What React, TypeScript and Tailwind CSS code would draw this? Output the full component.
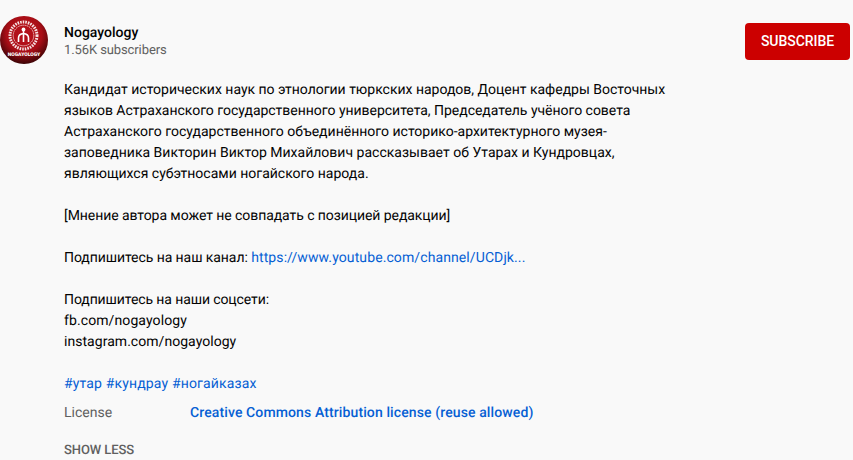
const Avatar = () => (
  <svg width="48" height="48" viewBox="0 0 48 48" className="shrink-0">
    <defs>
      <radialGradient id="bg" cx="50%" cy="38%" r="62%">
        <stop offset="0%" stopColor="#c0141c" />
        <stop offset="60%" stopColor="#a80e16" />
        <stop offset="100%" stopColor="#3c0406" />
      </radialGradient>
    </defs>
    <circle cx="24" cy="24" r="24" fill="url(#bg)" />
    <circle cx="23.5" cy="19.5" r="13.5" fill="none" stroke="#f6e3e3" strokeWidth="3" strokeDasharray="1.6 1" />
    <circle cx="23.5" cy="19.5" r="10.3" fill="none" stroke="#f6e3e3" strokeWidth="1" strokeDasharray="1.2 0.8" />
    <circle cx="23.5" cy="19.5" r="8.6" fill="#b2101a" />
    <circle cx="23.5" cy="13.5" r="1.9" fill="#fff" />
    <path d="M23.5 15 V26 M18.5 26 V22 Q18.5 18 23.5 17.5 Q28.5 18 28.5 22 V26" fill="none" stroke="#fff" strokeWidth="1.6" />
    <text x="24" y="39.5" textAnchor="middle" fill="#fff" fontSize="5" fontWeight="900" fontFamily="Roboto, sans-serif">NOGAYOLOGY</text>
  </svg>
);

const Link = ({ children }: { children: React.ReactNode }) => (
  <a className="text-[#065fd4]">{children}</a>
);

export default function App() {
  return (
    <div className="w-[853px] h-[460px] overflow-hidden bg-[#f9f9f9] font-['Roboto',sans-serif] text-[14px] leading-[21px] text-[#030303] [text-rendering:geometricPrecision]">
      <div className="flex items-start pt-4">
        <Avatar />
        <div className="ml-4 flex-1 pt-[8px]">
          <div className="font-medium leading-[18px]">Nogayology</div>
          <div className="text-[13px] leading-[18px] tracking-[-0.1px] text-[#606060]">1.56K subscribers</div>
        </div>
        <button className="mt-[7px] mr-[3px] h-[37px] w-[105px] rounded-sm bg-[#cc0000] text-[14px] font-medium tracking-[-0.05px] text-white">
          SUBSCRIBE
        </button>
      </div>
      <div className="ml-16 mt-4 w-[615px]">
        <p>
          <span className="tracking-[-0.012px]">Кандидат исторических наук по этнологии тюркских народов, Доцент кафедры Восточных</span>
          <br />
          <span className="tracking-[-0.025px]">языков Астраханского государственного университета, Председатель учёного совета</span>
          <br />
          Астраханского государственного объединённого историко-архитектурного музея-
          <br />
          <span className="tracking-[0.012px]">заповедника Викторин Виктор Михайлович рассказывает об Утарах и Кундровцах,</span>
          <br />
          являющихся субэтносами ногайского народа.
        </p>
        <p className="mt-[21px] tracking-[-0.07px]">[Мнение автора может не совпадать с позицией редакции]</p>
        <p className="mt-[21px]">
          <span className="tracking-[-0.07px]">Подпишитесь на наш канал: </span>
          <span className="tracking-[0.1px]"><Link>https://www.youtube.com/channel/UCDjk...</Link></span>
        </p>
        <p className="mt-[21px]">
          <span className="tracking-[-0.1px]">Подпишитесь на наши соцсети:</span>
          <br />
          <span className="tracking-[0.1px]">fb.com/nogayology</span>
          <br />
          <span className="tracking-[0.04px]">instagram.com/nogayology</span>
        </p>
        <p className="mt-[21px] tracking-[0.15px]">
          <Link>#утар</Link> <Link>#кундрау</Link> <Link>#ногайказах</Link>
        </p>
        <div className="mt-2 flex">
          <span className="w-[126px] text-[#606060]">License</span>
          <span className="font-medium tracking-[0.115px] text-[#065fd4]">Creative Commons Attribution license (reuse allowed)</span>
        </div>
        <div className="mt-[16px] text-[13px] font-medium tracking-[-0.1px] text-[#606060]">SHOW LESS</div>
      </div>
    </div>
  );
}
